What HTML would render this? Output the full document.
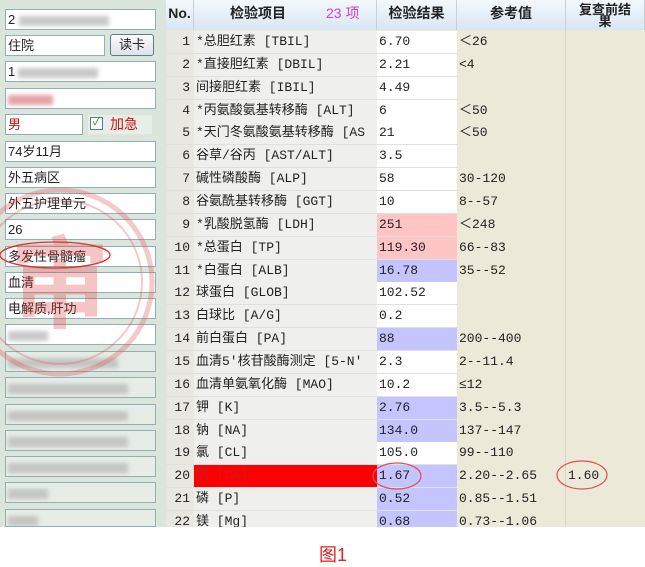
<!DOCTYPE html>
<html><head><meta charset="utf-8"><style>
*{margin:0;padding:0;box-sizing:border-box}
body{width:645px;height:564px;background:#fff;position:relative;overflow:hidden;font-family:"Liberation Mono","Noto Sans CJK SC",monospace;font-size:13px;color:#222}
.lp{position:absolute;left:0;top:0;width:166px;height:527px;background:#dce5dc}
.f{position:absolute;left:5px;width:151px;height:21px;background:#fff;border:1px solid #8fb0b8;padding-left:2px;line-height:19px;font-size:13px;font-family:"Liberation Sans","Noto Sans CJK SC",sans-serif;white-space:nowrap;overflow:hidden}
.f.d{background:#e6ede6}
.blur{display:inline-block;height:10px;background:#bbb;filter:blur(2px);vertical-align:middle;opacity:.8}
.tb{position:absolute;left:166px;top:0;width:479px;height:527px;background:#ece9d8;overflow:hidden}
.hd{position:absolute;top:0;height:30px;background:linear-gradient(#f4f8fc,#d8e6f4);border-right:1px solid #c8d0d8;font-weight:bold;font-size:14px;font-family:"Liberation Sans","Noto Sans CJK SC",sans-serif;text-align:center;line-height:26px}
.c{position:absolute;height:23px;line-height:22px;white-space:nowrap;overflow:hidden;border-bottom:1px solid #e0e0e0}
.c span{display:inline-block;height:22px;line-height:22px;vertical-align:top}
</style></head><body>
<div class="lp">
<div class="f" style="top:9px">2<span class="blur" style="width:90px;margin-left:4px"></span></div>
<div class="f" style="top:35px;width:100px">住院</div>
<div style="position:absolute;left:110px;top:34px;width:44px;height:22px;border:1px solid #5b7a90;border-radius:3px;background:linear-gradient(#fafafa,#dfe3e8);text-align:center;line-height:20px;font-size:13px;font-family:'Liberation Sans','Noto Sans CJK SC',sans-serif">读卡</div>
<div class="f" style="top:61px">1<span class="blur" style="width:80px;margin-left:3px"></span></div>
<div class="f" style="top:88px"><span class="blur" style="width:45px;background:#e08a90"></span></div>
<div class="f" style="top:114px;width:78px;color:#d01010">男</div>
<div style="position:absolute;left:88px;top:115px;width:64px;height:19px;background:#e8ede8"></div>
<div style="position:absolute;left:90px;top:117px;width:13px;height:13px;border:1px solid #5a7c90;background:#fff;color:#20a020;font-size:11px;line-height:11px;text-align:center">✓</div>
<div style="position:absolute;left:110px;top:114px;color:#d01010;font-size:14px;font-family:'Liberation Sans','Noto Sans CJK SC',sans-serif">加急</div>
<div class="f" style="top:141px">74岁11月</div>
<div class="f" style="top:167px">外五病区</div>
<div class="f" style="top:193px">外五护理单元</div>
<div class="f" style="top:219px">26</div>
<div class="f" style="top:246px">多发性骨髓瘤</div>
<div class="f" style="top:272px">血清</div>
<div class="f" style="top:298px">电解质,肝功</div>
<div class="f" style="top:324px"><span class="blur" style="width:40px"></span></div>
<div class="f d" style="top:351px"><span class="blur" style="width:110px"></span></div>
<div class="f d" style="top:377px"><span class="blur" style="width:120px"></span></div>
<div class="f d" style="top:404px"><span class="blur" style="width:120px"></span></div>
<div class="f d" style="top:430px"><span class="blur" style="width:120px"></span></div>
<div class="f d" style="top:456px"><span class="blur" style="width:120px"></span></div>
<div class="f d" style="top:482px"><span class="blur" style="width:40px"></span></div>
<div class="f d" style="top:509px;height:18px"><span class="blur" style="width:30px"></span></div>
</div>
<svg style="position:absolute;left:0;top:0" width="170" height="527">
<g fill="none" stroke="#e05050" opacity=".3"><circle cx="60" cy="282" r="92" stroke-width="5"/><circle cx="60" cy="282" r="82" stroke-width="2"/></g>
<text x="60" y="320" font-size="100" text-anchor="middle" fill="#e04040" opacity=".3" font-family="Noto Sans CJK SC" font-weight="bold">审</text>
<ellipse cx="55" cy="255" rx="55" ry="13" fill="none" stroke="#e03030" stroke-width="1.3"/>
</svg>
<div class="tb">
<div class="hd" style="left:0;width:28px">No.</div>
<div class="hd" style="left:28px;width:183px;text-align:left;padding-left:36px">检验项目<span style="color:#d040d0;font-weight:normal;margin-left:40px">23 项</span></div>
<div class="hd" style="left:211px;width:80px">检验结果</div>
<div class="hd" style="left:291px;width:109px">参考值</div>
<div class="hd" style="left:400px;width:79px;font-size:13px;line-height:12px;padding-top:4px">复查前结<br>果</div>
<div style="position:absolute;left:399px;top:30px;width:1px;height:497px;background:#d8d4c4"></div>
<div id="rows"></div>
</div>
<svg style="position:absolute;left:0;top:0" width="645" height="527">
<ellipse cx="397" cy="476" rx="24" ry="13" fill="none" stroke="#e05050" stroke-width="1.2"/>
<ellipse cx="582" cy="475" rx="25" ry="14" fill="none" stroke="#e05050" stroke-width="1.2"/>
</svg>
<div style="position:absolute;left:319px;top:541px;color:#e02020;font-size:18px;font-family:'Liberation Sans','Noto Sans CJK SC',sans-serif">图1</div>
<script>
var d=[["*总胆红素 [TBIL]","6.70","＜26",""],["*直接胆红素 [DBIL]","2.21","<4",""],["间接胆红素 [IBIL]","4.49","",""],["*丙氨酸氨基转移酶 [ALT]","6","＜50",""],["*天门冬氨酸氨基转移酶 [AS","21","＜50",""],["谷草/谷丙 [AST/ALT]","3.5","",""],["碱性磷酸酶 [ALP]","58","30-120",""],["谷氨酰基转移酶 [GGT]","10","8--57",""],["*乳酸脱氢酶 [LDH]","251","＜248","p"],["*总蛋白 [TP]","119.30","66--83","p"],["*白蛋白 [ALB]","16.78","35--52","b"],["球蛋白 [GLOB]","102.52","",""],["白球比 [A/G]","0.2","",""],["前白蛋白 [PA]","88","200--400","b"],["血清5′核苷酸酶测定 [5-N'","2.3","2--11.4",""],["血清单氨氧化酶 [MAO]","10.2","≤12",""],["钾 [K]","2.76","3.5--5.3","b"],["钠 [NA]","134.0","137--147","b"],["氯 [CL]","105.0","99--110",""],["钙 [CA]","1.67","2.20--2.65","b"],["磷 [P]","0.52","0.85--1.51","b"],["镁 [Mg]","0.68","0.73--1.06","b"]];
var h="";for(var i=0;i<d.length;i++){var t=Math.round(31+i*22.86),r=d[i];
var bg=r[3]=="p"?"#ffc4c4":r[3]=="b"?"#c4c4ff":"#fff";
h+='<div class="c" style="left:0;width:28px;top:'+t+'px;text-align:right;padding-right:4px;background:#e8e8e0"><span>'+(i+1)+'</span></div>';
h+='<div class="c" style="left:28px;width:183px;top:'+t+'px;padding-left:2px;background:'+(i==19?'#ff0000;color:#c02020':'#efefed')+'"><span>'+r[0]+'</span></div>';
h+='<div class="c" style="left:211px;width:80px;top:'+t+'px;padding-left:2px;background:'+bg+'"><span>'+r[1]+'</span></div>';
h+='<div class="c" style="left:291px;width:108px;top:'+t+'px;padding-left:2px;border:none"><span>'+r[2]+'</span></div>';
if(i==19)h+='<div class="c" style="left:400px;width:79px;top:'+t+'px;padding-left:2px;border:none"><span>1.60</span></div>';}
document.getElementById("rows").innerHTML=h;
</script>
</body></html>
